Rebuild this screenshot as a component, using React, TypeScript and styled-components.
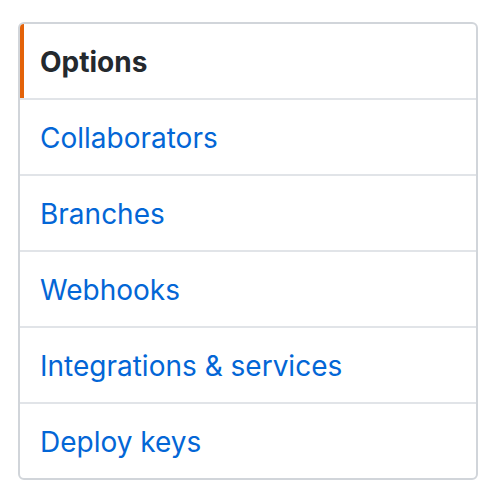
import React from 'react';
import styled, { createGlobalStyle } from 'styled-components';

const items = [
  'Collaborators',
  'Branches',
  'Webhooks',
  'Integrations & services',
  'Deploy keys',
];

const GlobalStyle = createGlobalStyle`
  body {
    margin: 0;
    background: #ffffff;
    font-family: Inter, "Liberation Sans", Arial, sans-serif;
  }
`;

const Page = styled.div`
  padding: 22px 10px 0 18px;
`;

const Menu = styled.nav`
  width: 460px;
  box-sizing: border-box;
  border: 2px solid #d1d5da;
  border-radius: 6px;
  background: #ffffff;
  overflow: hidden;
`;

const MenuItem = styled.a<{ $selected?: boolean }>`
  display: flex;
  align-items: center;
  height: 74px;
  box-sizing: border-box;
  padding: 2px 20px 0 20px;
  font-size: 28px;
  text-decoration: none;
  cursor: pointer;
  color: ${(p) => (p.$selected ? '#24292e' : '#0366d6')};
  font-weight: ${(p) => (p.$selected ? 700 : 400)};
  box-shadow: ${(p) => (p.$selected ? 'inset 4px 0 0 #e36209' : 'none')};
  & + & {
    border-top: 2px solid #e1e4e8;
    height: 76px;
  }
`;

const App = () => {
  return (
    <Page>
      <GlobalStyle />
      <Menu>
        <MenuItem $selected>Options</MenuItem>
        {items.map((item) => (
          <MenuItem key={item}>{item}</MenuItem>
        ))}
      </Menu>
    </Page>
  );
};

export default App;
